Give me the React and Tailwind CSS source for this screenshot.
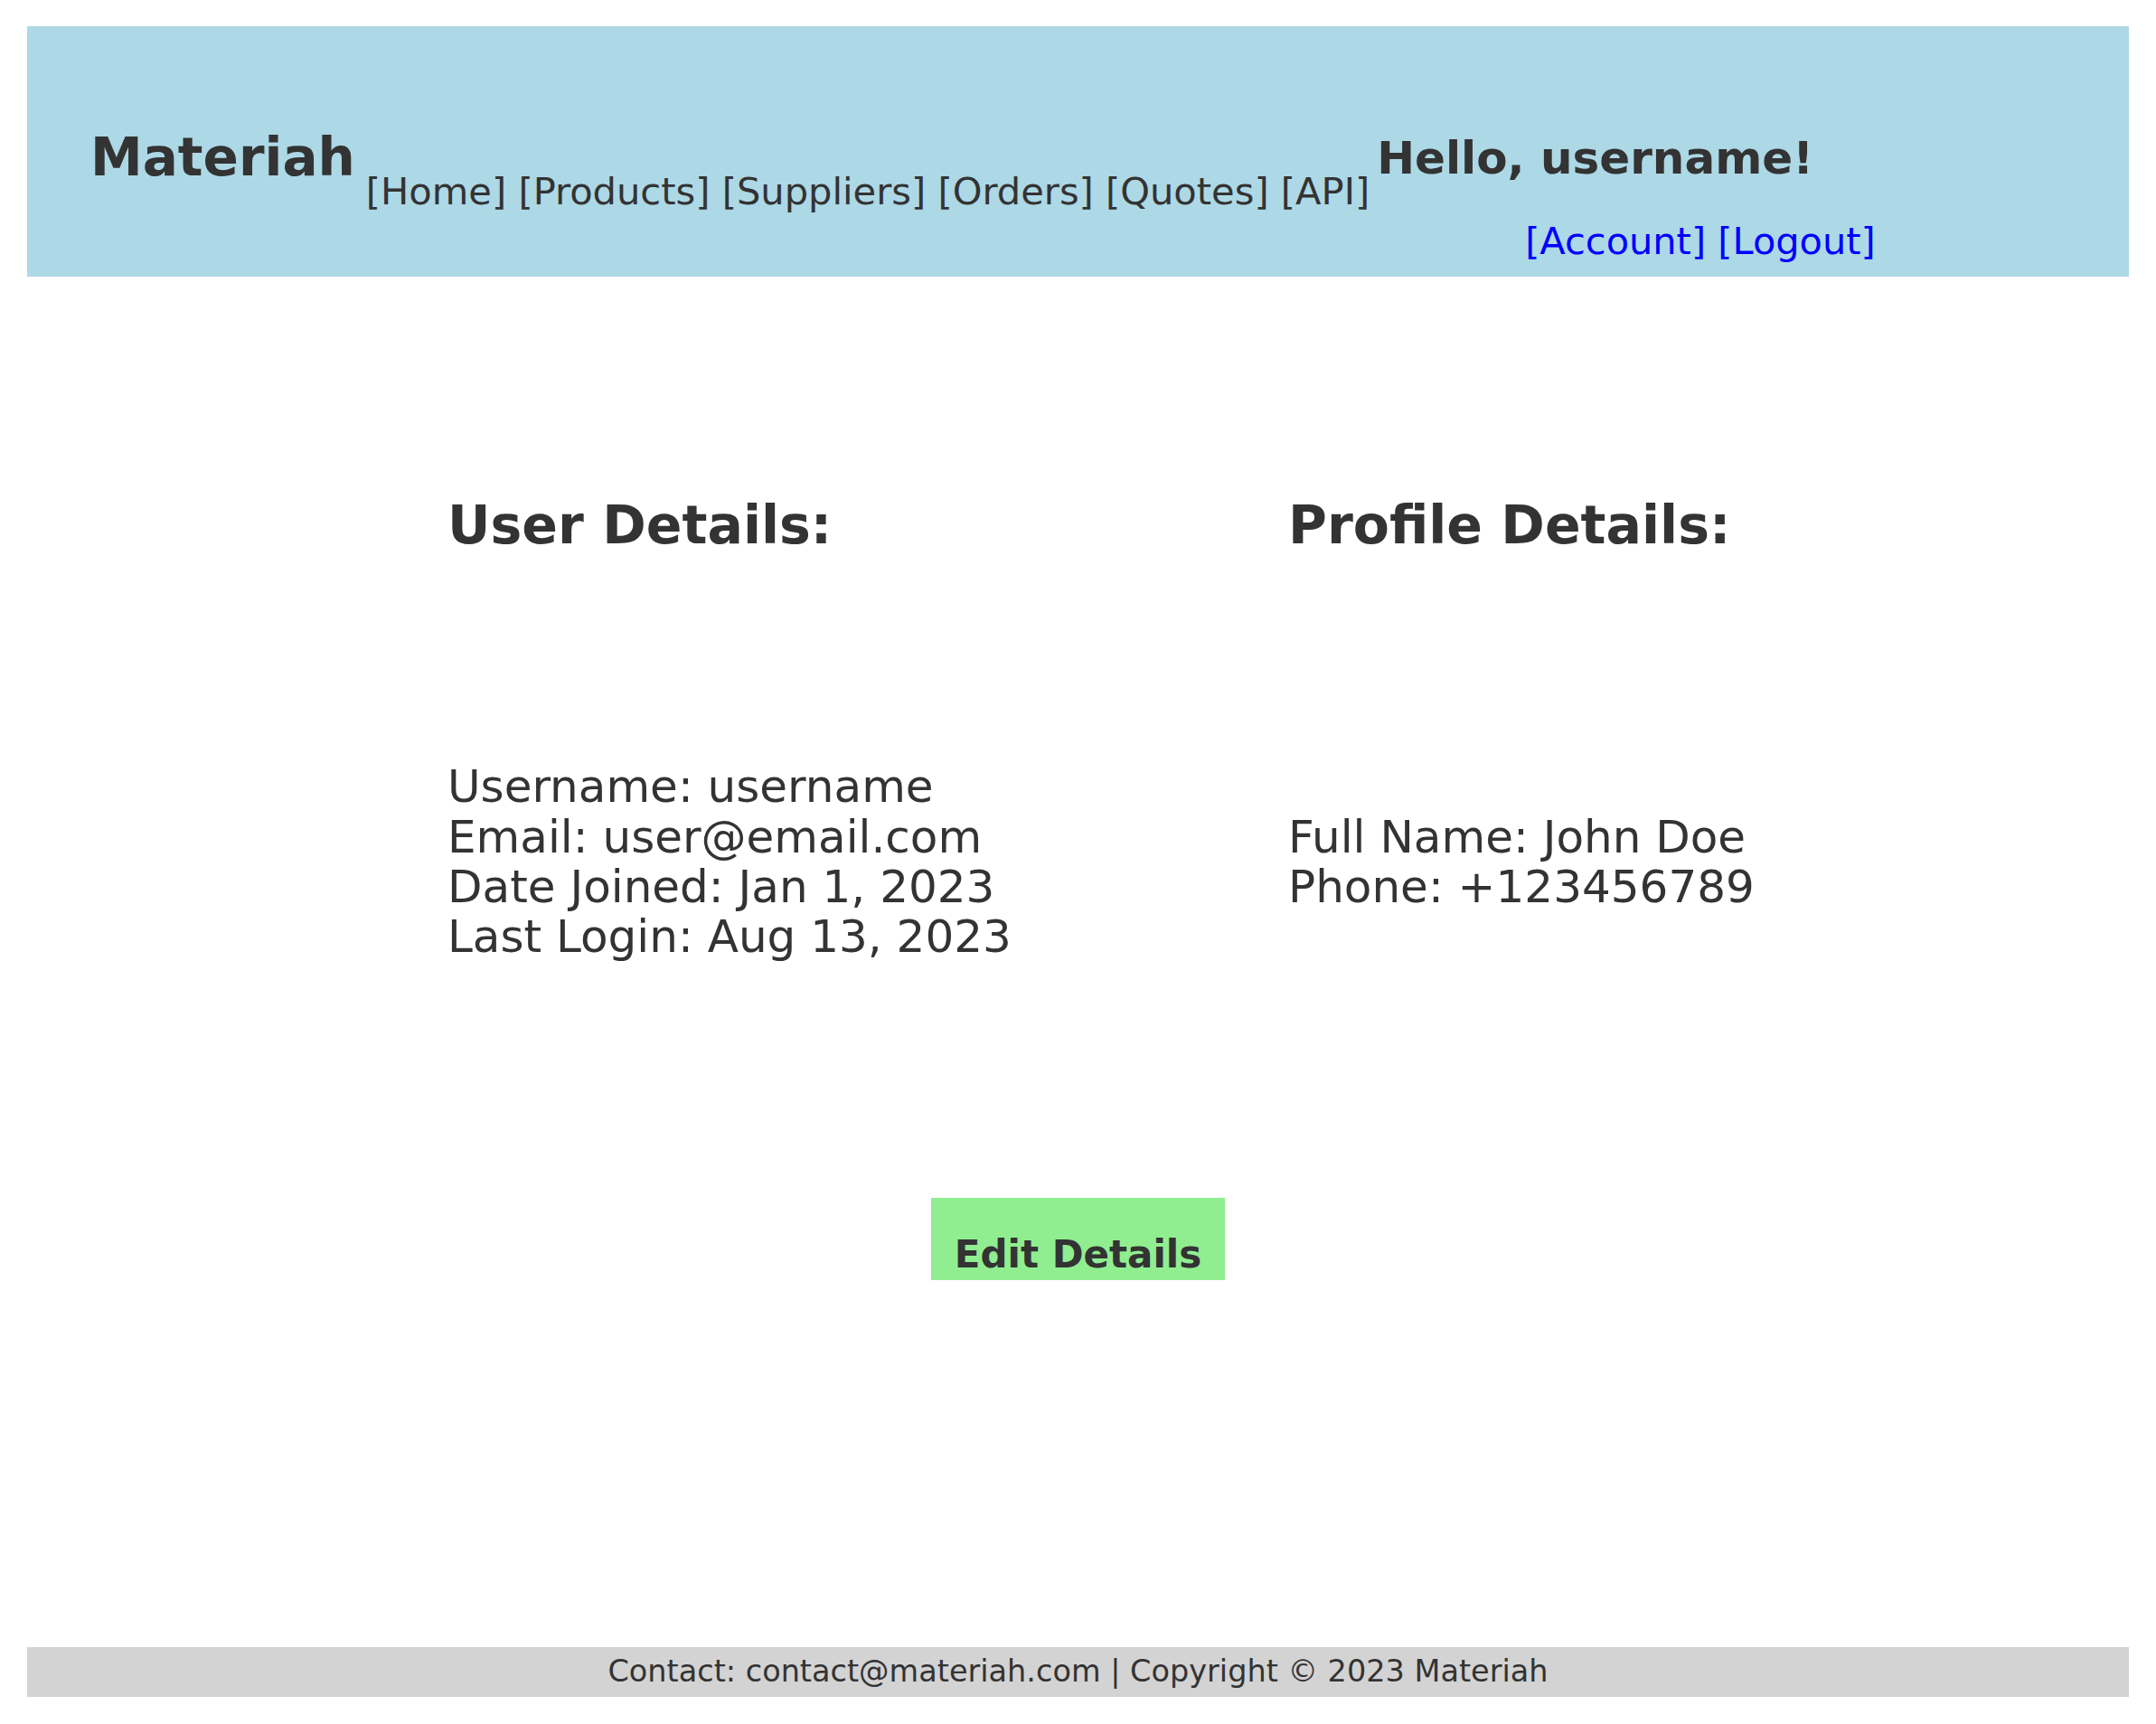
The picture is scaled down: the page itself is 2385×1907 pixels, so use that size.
import React from 'react'

const navItems = ['Home', 'Products', 'Suppliers', 'Orders', 'Quotes', 'API']

const userDetails = ['Username: username', 'Email: user@email.com', 'Date Joined: Jan 1, 2023', 'Last Login: Aug 13, 2023']
const profileDetails = ['Full Name: John Doe', 'Phone: +123456789']

const DetailsColumn = ({ title, lines }) => (
  <div className="flex flex-col">
    <h2 className="text-[58.5px] font-bold leading-none">{title}</h2>
    <div className="mt-[233px] h-[221px] flex flex-col justify-center">
      {lines.map((line) => (
        <p key={line} className="text-[50px] leading-[55.3px]">
          {line}
        </p>
      ))}
    </div>
  </div>
)

export default function App() {
  return (
    <div
      className="min-h-screen flex flex-col px-[30px] pt-[29px] pb-[30px] bg-white text-[#333333]"
      style={{ fontFamily: '"DejaVu Sans", Verdana, sans-serif' }}
    >
      <header className="h-[277px] bg-[#add8e6] flex items-start pl-[70px]">
        <h1 className="mt-[116px] text-[58px] font-bold leading-none">Materiah</h1>
        <nav className="mt-[162px] ml-[12px] text-[41.6px] leading-none">
          {navItems.map((item, index) => (
            <a key={item} href="#" className="text-[#333333]">
              [{item}]{index < navItems.length - 1 ? ' ' : ''}
            </a>
          ))}
        </nav>
        <div className="mt-[121px] ml-[8px] flex flex-col">
          <h2 className="text-[50px] font-bold leading-none">Hello, username!</h2>
          <div className="mt-[46px] ml-[164px] text-[41.5px] leading-none text-[#0000ff]">
            <a href="#">[Account]</a> <a href="#">[Logout]</a>
          </div>
        </div>
      </header>

      <main className="flex-1 flex flex-col">
        <div className="pt-[246px] pl-[465px] grid grid-cols-2">
          <DetailsColumn title="User Details:" lines={userDetails} />
          <DetailsColumn title="Profile Details:" lines={profileDetails} />
        </div>
        <div className="mt-[260px] flex justify-center">
          <button type="button" className="bg-[#90ee90] px-[26px] pt-[42.5px] pb-[7px] text-[42px] font-bold leading-none text-[#333333]">
            Edit Details
          </button>
        </div>
      </main>

      <footer className="h-[55px] bg-[#d3d3d3] pt-[10px] text-center text-[33.5px] leading-none">
        Contact: contact@materiah.com | Copyright © 2023 Materiah
      </footer>
    </div>
  )
}
